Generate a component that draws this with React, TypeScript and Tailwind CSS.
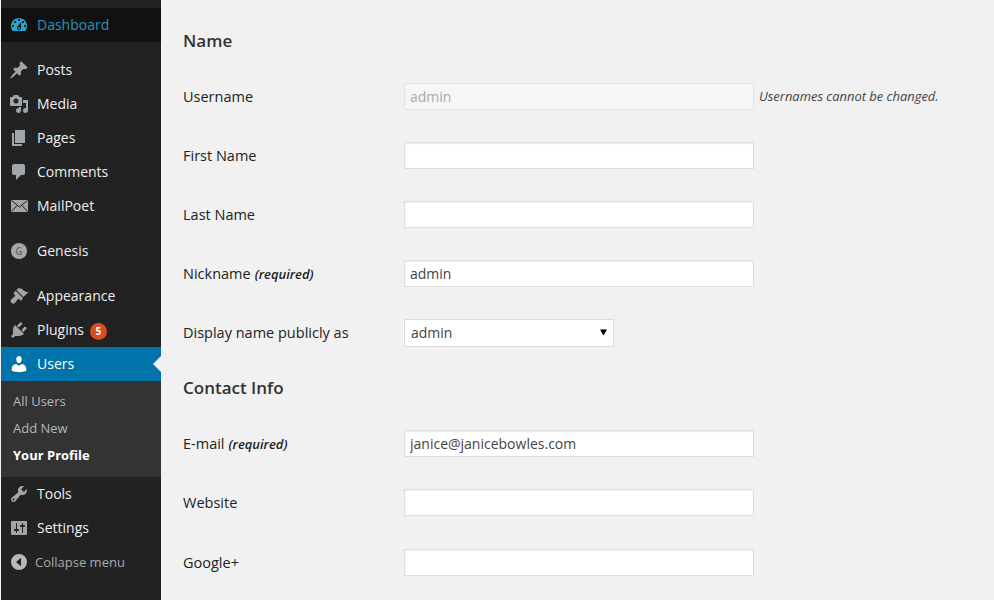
import type { ReactNode } from "react";

const ICONS: Record<string, ReactNode> = {
  dashboard: (
    <path d="M3.76 16h12.48c1.1-1.37 1.76-3.11 1.76-5 0-4.42-3.58-8-8-8s-8 3.58-8 8c0 1.89.66 3.63 1.76 5zM10 4c.55 0 1 .45 1 1s-.45 1-1 1-1-.45-1-1 .45-1 1-1zM6 6c.55 0 1 .45 1 1s-.45 1-1 1-1-.45-1-1 .45-1 1-1zm8 0c.55 0 1 .45 1 1s-.45 1-1 1-1-.45-1-1 .45-1 1-1zm-5.37 5.55L12 7v6c0 1.1-.9 2-2 2s-2-.9-2-2c0-.57.24-1.08.63-1.45zM4 10c.55 0 1 .45 1 1s-.45 1-1 1-1-.45-1-1 .45-1 1-1zm12 0c.55 0 1 .45 1 1s-.45 1-1 1-1-.45-1-1 .45-1 1-1zm-5 3c0-.55-.45-1-1-1s-1 .45-1 1 .45 1 1 1 1-.45 1-1z" fillRule="evenodd" />
  ),
  posts: (
    <path d="M10.44 3.02l1.82-1.82 6.36 6.35-1.83 1.82c-1.05-.68-2.48-.57-3.41.36l-.75.75c-.92.93-1.04 2.35-.35 3.41l-1.83 1.82-2.41-2.41-2.8 2.79c-.42.42-3.38 2.71-3.8 2.29s1.86-3.39 2.28-3.81l2.79-2.79L4.1 9.36l1.83-1.82c1.05.69 2.48.57 3.4-.36l.75-.75c.93-.92 1.05-2.35.36-3.41z" />
  ),
  media: (
    <path d="M13 11V4c0-.55-.45-1-1-1h-1.67L9 1H5L3.67 3H2c-.55 0-1 .45-1 1v7c0 .55.45 1 1 1h10c.55 0 1-.45 1-1zM7 4.500c1.380 0 2.500 1.120 2.500 2.500S8.380 9.500 7 9.500 4.500 8.380 4.500 7 5.620 4.500 7 4.500zM14 6h5v10.500c0 1.380-1.120 2.500-2.500 2.500S14 17.880 14 16.500s1.120-2.500 2.500-2.500c.17 0 .34.020.5.050V9h-3V6zm-4 8.050V13h2v3.500c0 1.380-1.120 2.500-2.500 2.500S7 17.880 7 16.500 8.120 14 9.500 14c.17 0 .34.020.5.050z" fillRule="evenodd" />
  ),
  pages: <path d="M6 15V2h10v13H6zm-1 1h8v2H3V5h2v11z" />,
  comments: <path d="M5 2h9c1.100 0 2 .9 2 2v7c0 1.100-.9 2-2 2h-2l-5 5v-5H5c-1.100 0-2-.9-2-2V4c0-1.100.9-2 2-2z" />,
  mailpoet: (
    <>
      <rect x="2" y="4" width="17" height="12" />
      <path d="M2.500 4.500L10.500 11L18.500 4.500M2.500 15.500L8 9.500M18.500 15.500L13 9.500" fill="none" stroke="#222222" strokeWidth="1" />
    </>
  ),
  appearance: (
    <path d="M14.480 11.060L7.410 3.990l1.500-1.500c.5-.56 2.300-.47 3.510.32 1.210.8 1.430 1.280 2.910 2.100 1.180.64 2.450 1.260 4.450.85zm-.71.71L6.700 4.700 4.930 6.470c-.39.39-.39 1.020 0 1.410l1.060 1.060c.39.39.39 1.030 0 1.420-.6.6-1.430 1.150-2.210 1.690-1.210.84-2.560 2-2.280 3.300.2.9 1.500 2.200 2.400 2.400 1.300.28 2.460-1.070 3.300-2.280.54-.78 1.090-1.610 1.690-2.210.39-.39 1.030-.39 1.420 0l1.060 1.060c.39.39 1.020.39 1.410 0z" />
  ),
  plugins: (
    <path d="M13.110 4.360L9.870 7.600 8 5.730l3.240-3.240c.35-.34 1.050-.2 1.560.32.52.51.66 1.210.31 1.550zm-8 1.770l.91-1.120 9.010 9.010-1.190.84c-.71.71-2.630 1.160-3.820 1.160H6.140L4.900 17.260c-.59.59-1.540.59-2.120 0-.59-.58-.59-1.530 0-2.120l1.240-1.240v-3.880c0-1.130.4-3.190 1.090-3.890zm7.260 3.970l3.240-3.240c.34-.35 1.040-.21 1.550.31.52.51.66 1.210.31 1.550l-3.240 3.250z" />
  ),
  users: (
    <path d="M10 9.250c-2.270 0-2.730-3.440-2.730-3.440C7 4.020 7.820 2 9.970 2c2.160 0 2.980 2.020 2.710 3.810 0 0-.41 3.440-2.680 3.440zm0 2.570L12.720 10c2.390 0 4.520 2.330 4.520 4.530v2.490s-3.650 1.130-7.240 1.130c-3.650 0-7.240-1.130-7.240-1.130v-2.490c0-2.250 1.940-4.480 4.470-4.480z" />
  ),
  tools: (
    <path d="M16.680 9.770c-1.340 1.340-3.300 1.670-4.950.99l-5.410 6.520c-.99.99-2.590.99-3.580 0s-.99-2.590 0-3.570l6.520-5.420c-.68-1.650-.35-3.610.99-4.950 1.280-1.280 3.120-1.620 4.720-1.060l-2.890 2.890 2.820 2.820 2.860-2.870c.53 1.580.18 3.390-1.080 4.650zM3.810 16.210c.4.39 1.040.39 1.430 0 .4-.4.4-1.040 0-1.430-.39-.4-1.030-.4-1.430 0-.39.39-.39 1.030 0 1.430z" fillRule="evenodd" />
  ),
  settings: (
    <path d="M18 16V4c0-.55-.45-1-1-1H3c-.55 0-1 .45-1 1v12c0 .55.45 1 1 1h14c.55 0 1-.45 1-1zM8 11h1c.55 0 1 .45 1 1s-.45 1-1 1H8v1.500c0 .28-.22.5-.5.5s-.5-.22-.5-.5V13H6c-.55 0-1-.45-1-1s.45-1 1-1h1V5.500c0-.28.22-.5.5-.5s.5.22.5.5V11zm5-2h-1c-.55 0-1-.45-1-1s.45-1 1-1h1V5.500c0-.28.22-.5.5-.5s.5.22.5.5V7h1c.55 0 1 .45 1 1s-.45 1-1 1h-1v5.500c0 .28-.22.5-.5.5s-.5-.22-.5-.5V9z" fillRule="evenodd" />
  ),
};

function MenuIcon({ name }: { name: string }) {
  return (
    <svg viewBox="0 0 20 20" className="w-5 h-5 shrink-0" fill="currentColor">
      {ICONS[name]}
    </svg>
  );
}

function MenuItem({ icon, label, badge }: { icon: string; label: string; badge?: string }) {
  return (
    <div className="flex items-center gap-2 h-[34px] pl-2 text-[#eeeeee]">
      <span className="text-[#a0a5aa] flex">
        <MenuIcon name={icon} />
      </span>
      <span>{label}</span>
      {badge ? (
        <span className="-ml-[2px] mt-[2px] w-[17px] h-[17px] rounded-full bg-[#d54e21] text-white text-[10px] font-bold flex items-center justify-center">
          {badge}
        </span>
      ) : null}
    </div>
  );
}

function Sidebar() {
  return (
    <aside className="w-40 shrink-0 bg-[#222222] pt-2 text-[14px] leading-5">
      <div className="flex items-center gap-2 h-[34px] pl-2 bg-[#111111] text-[#2b93bd]">
        <span className="text-[#2ea2cc] flex">
          <MenuIcon name="dashboard" />
        </span>
        <span>Dashboard</span>
      </div>

      <div className="mt-[11px]">
        <MenuItem icon="posts" label="Posts" />
        <MenuItem icon="media" label="Media" />
        <MenuItem icon="pages" label="Pages" />
        <MenuItem icon="comments" label="Comments" />
        <MenuItem icon="mailpoet" label="MailPoet" />
      </div>

      <div className="mt-[11px] flex items-center gap-2 h-[34px] pl-2 text-[#eeeeee]">
        <span className="w-5 h-5 flex items-center justify-center">
          <span className="w-4 h-4 rounded-full bg-[#a7a7a7] text-[#666666] text-[10px] font-semibold flex items-center justify-center">
            G
          </span>
        </span>
        <span>Genesis</span>
      </div>

      <div className="mt-[11px]">
        <MenuItem icon="appearance" label="Appearance" />
        <MenuItem icon="plugins" label="Plugins" badge="5" />
      </div>

      <div className="relative flex items-center gap-2 h-[34px] pl-2 bg-[#0073aa] text-white">
        <MenuIcon name="users" />
        <span>Users</span>
        <span className="absolute right-0 top-[9px] border-y-8 border-r-8 border-y-transparent border-r-[#f1f1f1]" />
      </div>

      <div className="bg-[#333333] h-24 pt-[6px] text-[13px] text-[#b4b9be]">
        <div className="h-[27px] flex items-center pl-3">All Users</div>
        <div className="h-[27px] flex items-center pl-3">Add New</div>
        <div className="h-[27px] flex items-center pl-3 font-bold text-white">Your Profile</div>
      </div>

      <MenuItem icon="tools" label="Tools" />
      <MenuItem icon="settings" label="Settings" />

      <div className="flex items-center h-[34px] pl-[10px] gap-2 text-[13px] text-[#aaaaaa]">
        <svg viewBox="0 0 16 16" className="w-4 h-4 shrink-0 text-[#b4b9be]" fill="currentColor">
          <path d="M8 0a8 8 0 1 1 0 16A8 8 0 0 1 8 0zm2 3.800L5 8l5 4.200V3.800z" fillRule="evenodd" />
        </svg>
        <span>Collapse menu</span>
      </div>
    </aside>
  );
}

function TextField({ value = "", disabled = false }: { value?: string; disabled?: boolean }) {
  return (
    <input
      readOnly
      value={value}
      className={
        disabled
          ? "w-[350px] h-[27px] px-[5px] border border-[#e2e2e2] bg-[#f6f6f6] text-[#aaaaaa] text-[14px] outline-none"
          : "w-[350px] h-[27px] px-[5px] border border-[#dddddd] bg-white text-[#444444] text-[14px] outline-none shadow-[inset_0_1px_2px_rgba(0,0,0,0.07)]"
      }
    />
  );
}

function Row({ label, hint, gapBelow, children }: { label: string; hint?: string; gapBelow?: boolean; children: ReactNode }) {
  return (
    <div className={gapBelow ? "flex items-center h-[59px] mb-px" : "flex items-center h-[59px]"}>
      <div className="w-[221px] shrink-0 text-[#222222] text-[14.5px]">
        {label}
        {hint ? <em className="ml-1 text-[13px] font-semibold">{hint}</em> : null}
      </div>
      {children}
    </div>
  );
}

export default function App() {
  return (
    <div
      className="flex h-[600px] overflow-hidden bg-[#f1f1f1] pl-px text-[14px]"
      style={{ fontFamily: '"Open Sans", sans-serif' }}
    >
      <Sidebar />
      <main className="flex-1 pl-[22px]">
        <h2 className="pt-[29px] h-[67px] text-[17px] leading-6 font-semibold text-[#333333]">Name</h2>
        <Row label="Username">
          <TextField value="admin" disabled />
          <em className="ml-[5px] text-[12.95px] text-[#444444]">Usernames cannot be changed.</em>
        </Row>
        <Row label="First Name">
          <TextField />
        </Row>
        <Row label="Last Name">
          <TextField />
        </Row>
        <Row label="Nickname" hint="(required)">
          <TextField value="admin" />
        </Row>
        <Row label="Display name publicly as">
          <div className="w-[210px] h-7 pl-[6px] pr-[6px] flex items-center justify-between bg-white border border-[#dddddd] text-[#444444]">
            <span>admin</span>
            <svg viewBox="0 0 7 7" className="w-[7px] h-[7px] text-black" fill="currentColor">
              <path d="M0 .5h7L3.500 6.500z" />
            </svg>
          </div>
        </Row>
        <h2 className="h-[52px] pt-[14px] text-[17px] leading-6 font-semibold text-[#333333]">Contact Info</h2>
        <Row label="E-mail" hint="(required)">
          <TextField value="janice@janicebowles.com" />
        </Row>
        <Row label="Website" gapBelow>
          <TextField />
        </Row>
        <Row label="Google+">
          <TextField />
        </Row>
      </main>
    </div>
  );
}
